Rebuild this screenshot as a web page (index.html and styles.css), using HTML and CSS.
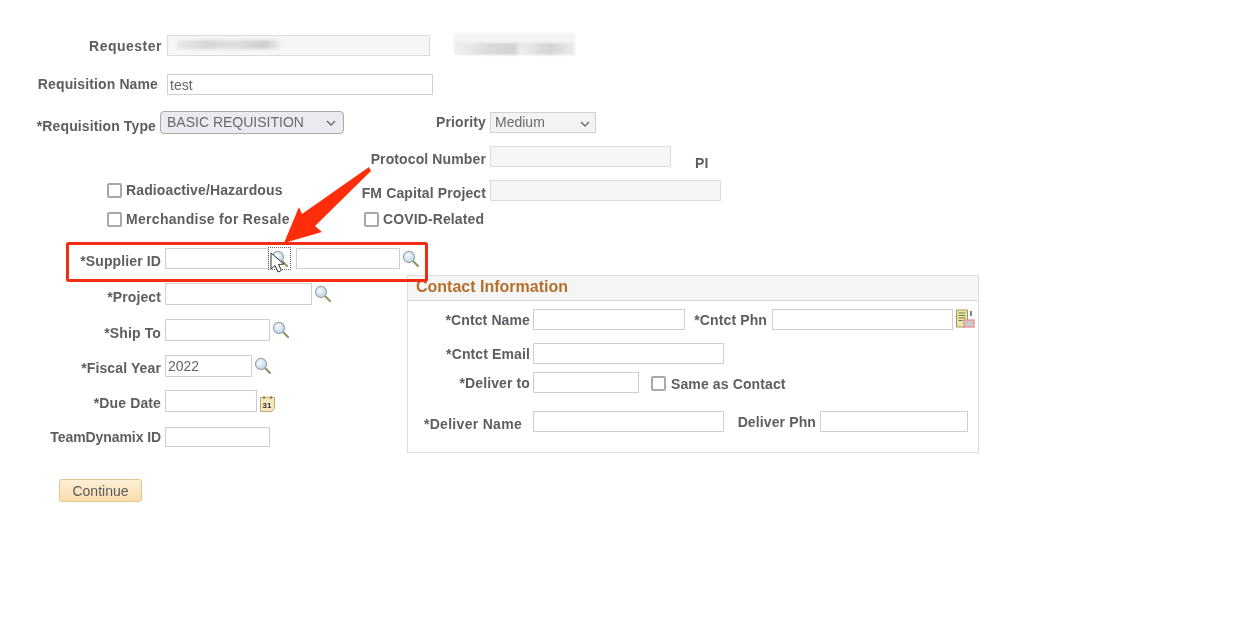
FILE: index.html
```html
<!DOCTYPE html>
<html lang="en">
<head>
<meta charset="utf-8">
<title>Requisition</title>
<link rel="stylesheet" href="styles.css">
</head>
<body>
<svg class="defs" width="0" height="0" aria-hidden="true">
  <defs>
    <radialGradient id="lens" cx="40%" cy="35%" r="70%">
      <stop offset="0" stop-color="#f6fafc"/>
      <stop offset="1" stop-color="#b9d0de"/>
    </radialGradient>
    <symbol id="mag" viewBox="0 0 18 18">
      <path d="M11 11 L16 16" stroke="#8f9a62" stroke-width="2.200" stroke-linecap="round"/>
      <circle cx="7" cy="7" r="5.600" fill="url(#lens)" stroke="#97a4ab" stroke-width="1.100"/>
    </symbol>
  </defs>
</svg>
<main class="page">
  <div class="row r-req">
    <label class="lbl w162 d1 wide">Requester</label>
    <div class="field ro w263 mask"><span class="smear"></span></div>
    <div class="smear-name"></div>
  </div>
  <div class="row r-name">
    <label class="lbl w158 d0">Requisition Name</label>
    <input class="field w266 ml9" value="test">
  </div>
  <div class="row r-type">
    <label class="lbl w156 d5">*Requisition Type</label>
    <select class="pick pick-type"><option>BASIC REQUISITION</option></select>
    <label class="lbl w142 d1">Priority</label>
    <select class="pick pick-pri"><option>Medium</option></select>
  </div>
  <div class="row r-proto">
    <label class="lbl w486 d3">Protocol Number</label>
    <input class="field ro w181 ml4">
    <span class="lbl-plain pi">PI</span>
  </div>
  <div class="row r-fm">
    <input type="checkbox" class="chk ml107 mt3">
    <label class="lbl-plain w-radio">Radioactive/Hazardous</label>
    <label class="lbl w198 d3">FM Capital Project</label>
    <input class="field ro w231 ml4">
  </div>
  <div class="row r-merch">
    <input type="checkbox" class="chk ml107">
    <label class="lbl-plain w-merch wider">Merchandise for Resale</label>
    <input type="checkbox" class="chk">
    <label class="lbl-plain cov">COVID-Related</label>
  </div>
  <div class="row r-sup">
    <label class="lbl w161 d3">*Supplier ID</label>
    <input class="field w104 ml4">
    <button class="ico focus" type="button" aria-label="Look up"><svg class="mag"><use href="#mag"/></svg></button>
    <input class="field w104 ml6">
    <button class="ico" type="button" aria-label="Look up"><svg class="mag"><use href="#mag"/></svg></button>
  </div>
  <div class="lower">
    <div class="left">
      <div class="row r-l gap14"><label class="lbl w161 d4">*Project</label><input class="field tall w147 ml4"><button class="ico" type="button" aria-label="Look up"><svg class="mag"><use href="#mag"/></svg></button></div>
      <div class="row r-l gap14"><label class="lbl w161 d4">*Ship To</label><input class="field tall w105 ml4"><button class="ico" type="button" aria-label="Look up"><svg class="mag"><use href="#mag"/></svg></button></div>
      <div class="row r-l gap13"><label class="lbl w161 d3">*Fiscal Year</label><input class="field tall w87 ml4" value="2022"><button class="ico" type="button" aria-label="Look up"><svg class="mag"><use href="#mag"/></svg></button></div>
      <div class="row r-l gap15"><label class="lbl w161 d3">*Due Date</label><input class="field tall w92 ml4">
        <button class="ico ico-cal" type="button" aria-label="Calendar">
          <svg class="mag" viewBox="0 0 18 18"><path d="M1.500 2.500h14v11l-3 3h-11z" fill="#f3e6c0" stroke="#c2ab6e"/><path d="M5 1v3M12 1v3" stroke="#7a6836" stroke-width="1.200"/><text x="3.600" y="12.500" class="cal">31</text></svg>
        </button>
      </div>
      <div class="row r-l"><label class="lbl w161 d0 tight">TeamDynamix ID</label><input class="field short w105 ml4"></div>
    </div>
    <section class="contact">
      <h2 class="head">Contact Information</h2>
      <div class="row c1">
        <label class="lbl w122 d1">*Cntct Name</label><input class="field w152 ml3">
        <label class="lbl w82 d1">*Cntct Phn</label><input class="field w181 ml5">
        <button class="ico ico-doc" type="button" aria-label="Directory">
          <svg class="mag" viewBox="0 0 20 20"><path d="M1.500 1h11v11h-3v6h-8z" fill="#ece7a8" stroke="#9b9a5a"/><path d="M3.500 4h7M3.500 6.500h7M3.500 9h7M3.500 11.500h4" stroke="#6f7a4a"/><path d="M16 2v5" stroke="#333" stroke-width="1.200"/><rect x="9" y="11" width="10" height="7" fill="#c9c9c9" stroke="#ef8d8d" stroke-width="1.300"/></svg>
        </button>
      </div>
      <div class="row c2"><label class="lbl w122 d1">*Cntct Email</label><input class="field w191 ml3"></div>
      <div class="row c3"><label class="lbl w122 d1">*Deliver to</label><input class="field w106 ml3">
        <input type="checkbox" class="chk ml12 mt4"><label class="lbl-plain same d2">Same as Contact</label></div>
      <div class="row c4"><label class="lbl w114 d3 wider">*Deliver Name</label><input class="field w191 ml11">
        <label class="lbl w92 d1">Deliver Phn</label><input class="field w148 ml4"></div>
    </section>
  </div>
  <button class="go" type="button">Continue</button>
</main>
<svg class="mark" width="1249" height="629" viewBox="0 0 1249 629" aria-hidden="true">
  <rect x="67.500" y="243.500" width="359" height="37" fill="none" stroke="#f12d12" stroke-width="3" rx="1"/>
  <polygon points="369,167 302,214 299,207 284,243 322,232 315,226 371,171" fill="#ff2d0a"/>
  <path d="M271 253 L271 269 L275 265.500 L278 272 L281.500 270.500 L278.500 264.500 L284 264 Z" fill="#fff" stroke="#333" stroke-width="1"/>
</svg>
</body>
</html>
```
FILE: styles.css
```css
html, body { margin: 0; padding: 0; background: #fff; }
body { position: relative; height: 629px; overflow: hidden; font-family: "Liberation Sans", Arial, sans-serif; }
.defs { position: absolute; }
.page { filter: blur(0.35px); padding-top: 35px; color: #5b5b60; font-size: 14px; }
.row { display: flex; align-items: flex-start; height: 21px; }
.lbl, .lbl-plain { box-sizing: border-box; font-weight: 700; font-size: 14px; line-height: 20px; letter-spacing: 0.12px; color: #5d5d62; white-space: nowrap; flex: none; }
.lbl { text-align: right; }
.wide { letter-spacing: 0.5px; }
.wider { letter-spacing: 0.3px; }
.tight { letter-spacing: -0.08px; }
.field { box-sizing: border-box; height: 21px; border: 1px solid #cfcfcf; background: #fff; padding: 0 2px; font: 14px/19px "Liberation Sans", Arial, sans-serif; color: #666; flex: none; border-radius: 0; outline: 0; }
.tall { height: 22px; }
.short { height: 20px; }
.ro { background: #f6f6f6; border-color: #dcdcdc; }

.chk { -webkit-appearance: none; appearance: none; box-sizing: border-box; width: 15px; height: 15px; margin: 0; border: 2px solid #a8a8ac; border-radius: 2px; background: #fff; flex: none; }

.d0 { padding-top: 0; } .d1 { padding-top: 1px; } .d2 { padding-top: 2px; } .d3 { padding-top: 3px; } .d4 { padding-top: 4px; } .d5 { padding-top: 5px; }
.w104 { width: 104px; } .w105 { width: 105px; } .w87 { width: 87px; } .w92 { width: 92px; } .w106 { width: 106px; }
.w147 { width: 147px; } .w148 { width: 148px; } .w152 { width: 152px; } .w181 { width: 181px; } .w191 { width: 191px; }
.w231 { width: 231px; } .w263 { width: 263px; } .w266 { width: 266px; }
label.w82 { width: 82px; } label.w92 { width: 92px; } label.w114 { width: 114px; } label.w122 { width: 122px; } label.w142 { width: 142px; }
label.w156 { width: 156px; } label.w158 { width: 158px; } label.w161 { width: 161px; } label.w162 { width: 162px; }
label.w198 { width: 198px; } label.w486 { width: 486px; }
.ml3 { margin-left: 3px; } .ml4 { margin-left: 4px; } .ml5 { margin-left: 5px; } .ml6 { margin-left: 6px; } .ml9 { margin-left: 9px; } .ml11 { margin-left: 11px; } .ml12 { margin-left: 12px; }
.ml107 { margin-left: 107px; }
.mt3 { margin-top: 3px; } .mt4 { margin-top: 4px; }

.mask { margin-left: 5px; overflow: hidden; }
.smear { display: block; width: 104px; height: 9px; margin: 4px 0 0 7px; background: linear-gradient(90deg, #e8e8e8, #d6d6d6 30%, #dfdfdf 55%, #cdcdcd 85%, #f1f1f1); filter: blur(1.5px); }
.smear-name { width: 121px; height: 22px; margin: -2px 0 0 24px; flex: none; background: linear-gradient(#f3f3f3 0 46%, transparent 46%), linear-gradient(90deg, #f0f0f0, #dadada 30%, #d2d2d2 50%, #ededed 55%, #d4d4d4 80%, #eeeeee); filter: blur(1px); }

.r-name { margin-top: 18px; }
.r-type { margin-top: 16px; height: 23px; }
.pick { -webkit-appearance: none; appearance: none; box-sizing: border-box; font: 14px "Liberation Sans", Arial, sans-serif; color: #6a6a70; flex: none; padding: 0 0 2px 6px; background-repeat: no-repeat; background-image: url("data:image/svg+xml,%3Csvg xmlns='http://www.w3.org/2000/svg' width='10' height='6'%3E%3Cpath d='M1 1l4 4 4-4' fill='none' stroke='%23666' stroke-width='1.300'/%3E%3C/svg%3E"); }
.pick-type { width: 184px; height: 23px; margin-left: 4px; border: 1px solid #a9a9ad; border-radius: 4px; background-color: #e9ebef; background-position: 165px 8px; }
.pick-pri { width: 106px; height: 21px; margin: 1px 0 0 4px; padding-left: 4px; border: 1px solid #d2d2d2; border-radius: 0; background-color: #f3f3f3; background-position: 89px 8px; }

.r-proto { margin-top: 12px; }
.pi { margin: 7px 0 0 24px; }
.r-fm { margin-top: 13px; }
.w-radio { width: 162px; margin-left: 4px; }
.r-merch { margin-top: 11px; height: 15px; }
.w-merch { width: 238px; margin-left: 4px; }
.cov { margin-left: 4px; }
.r-merch .lbl-plain { margin-top: -3px; }
.r-sup { margin-top: 21px; }

.ico { width: 21px; height: 21px; padding: 0; border: 0; background: none; flex: none; display: flex; align-items: center; justify-content: center; }
.mag { width: 18px; height: 18px; display: block; }
.focus { outline: 1px dotted #666; outline-offset: 0; }
.cal { font: 700 8px "Liberation Sans", Arial, sans-serif; fill: #333; }
.ico-cal { margin-top: 3px; }
.ico-doc { margin-top: -1px; margin-left: 1px; }
.ico-doc .mag { width: 20px; height: 20px; }

.lower { display: flex; margin-top: 6px; }
.left { width: 407px; flex: none; padding-top: 8px; box-sizing: border-box; }
.r-l { height: 22px; }
.gap14 { margin-bottom: 14px; }
.gap13 { margin-bottom: 13px; }
.gap15 { margin-bottom: 15px; }
.contact { box-sizing: border-box; width: 572px; height: 178px; border: 1px solid #ddd; flex: none; }
.head { margin: 0; box-sizing: border-box; height: 25px; padding: 0 0 0 8px; background: #f5f5f5; border-bottom: 1px solid #d8d8d8; font: 700 16px/21px "Liberation Sans", Arial, sans-serif; color: #b56f2b; }
.c1 { margin-top: 8px; }
.c2 { margin-top: 13px; }
.c3 { margin-top: 8px; }
.c4 { margin-top: 18px; }
.same { margin-left: 5px; }

.go { display: block; box-sizing: border-box; width: 83px; height: 23px; margin: 26px 0 0 59px; border: 1px solid #e3c48f; border-radius: 3px; background: linear-gradient(#fdf0d6, #fbdcae); font: 14px "Liberation Sans", Arial, sans-serif; color: #5a5a5a; padding: 0; }

.mark { position: absolute; left: 0; top: 0; pointer-events: none; }
```
